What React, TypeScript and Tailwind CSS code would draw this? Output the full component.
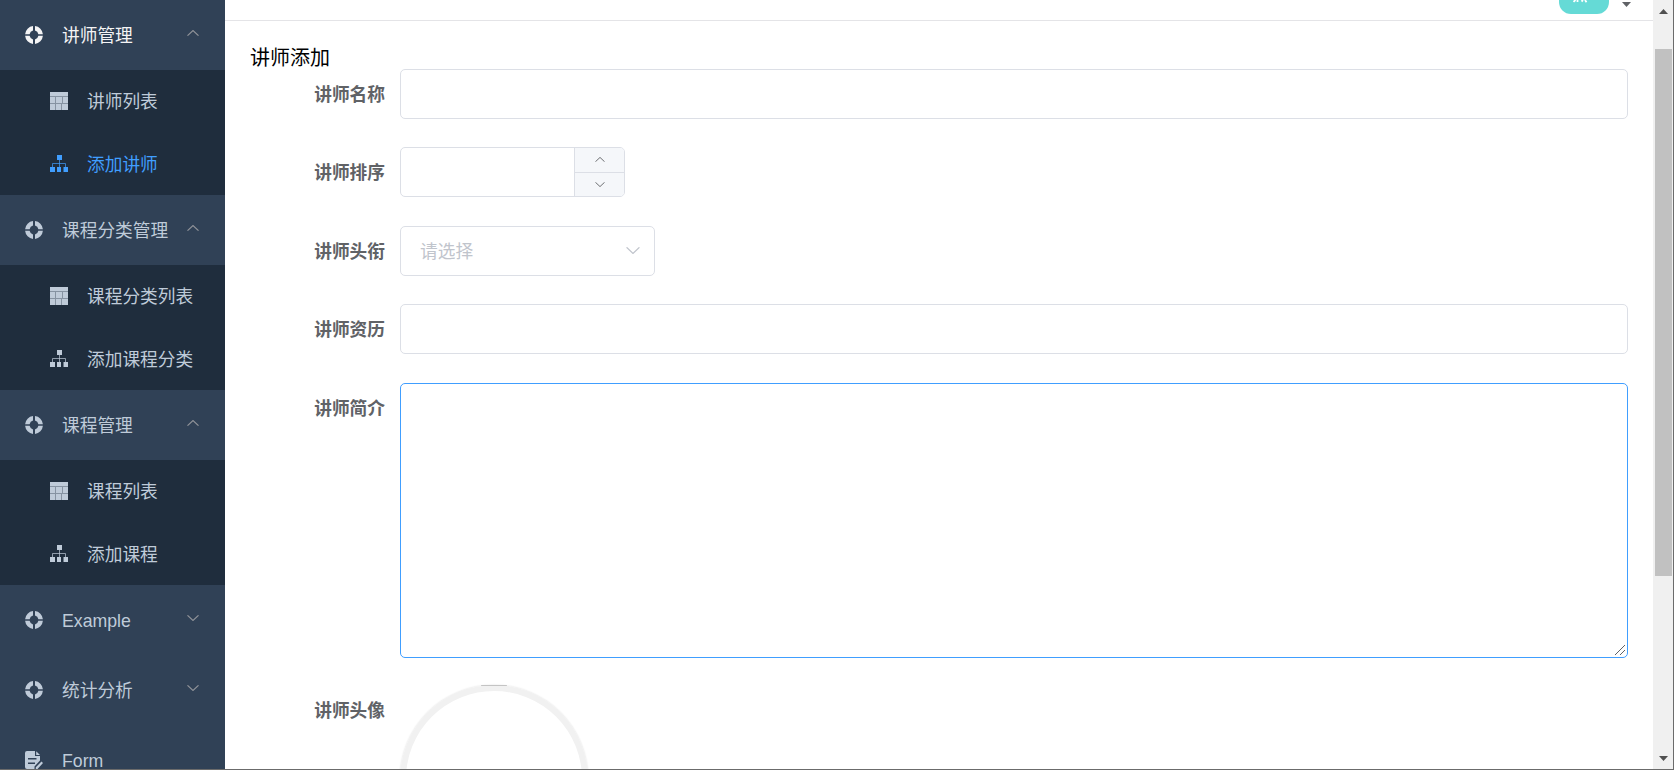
import type { ReactNode } from "react";

const ICON = "h-[18px] w-[18px] shrink-0 fill-current";

function RingIcon() {
  return (
    <svg viewBox="0 0 18 18" className={ICON}>
      <path d="M8 0.1V4.6A4.6 4.6 0 0 0 4.6 8.2H0.1A9 9 0 0 1 8 0.1ZM10 0.1A9 9 0 0 1 17.9 8.2H13.4A4.6 4.6 0 0 0 10 4.6ZM17.9 9.8A9 9 0 0 1 10 17.9V13.4A4.6 4.6 0 0 0 13.4 9.8ZM8 17.9A9 9 0 0 1 0.1 9.8H4.6A4.6 4.6 0 0 0 8 13.4Z" />
    </svg>
  );
}

function TableIcon() {
  return (
    <svg viewBox="0 0 18 18" shapeRendering="crispEdges" className={ICON}>
      <path d="M0 4H18V5H0ZM0 11H18V12H0ZM5 5H6V11H5ZM12 5H13V11H12ZM5 12H6V18H5ZM11 12H12V18H11Z" fillOpacity="0.65" />
      <path d="M0 0H18V4H0ZM0 5H5V11H0ZM6 5H12V11H6ZM13 5H18V11H13ZM0 12H5V18H0ZM6 12H11V18H6ZM12 12H18V18H12Z" />
    </svg>
  );
}

function TreeIcon() {
  return (
    <svg viewBox="0 0 18 18" className={ICON}>
      <path d="M7 0H12V5H7ZM0 12H5V17H0ZM7 12H11V17H7ZM13.5 12H18V17H13.5Z" />
      <path d="M9.5 5V12M2.5 12V8.5H15.5V12" className="fill-none stroke-current" strokeOpacity="0.7" />
    </svg>
  );
}

function FormIcon() {
  return (
    <svg viewBox="0 0 18 18" className={ICON}>
      <path d="M2 0H10V5H15V9.5L9.5 15.5V18H2A2 2 0 0 1 0 16V2A2 2 0 0 1 2 0ZM3 7V8.5H11.5V7ZM3 11.5V13H10V11.5Z" fillRule="evenodd" />
      <path d="M11.2 0.3L15 4H11.2ZM16.5 10.5L18 12L12.5 18H10.8V16.2Z" />
    </svg>
  );
}

function Chevron({ up, className }: { up?: boolean; className: string }) {
  return (
    <svg viewBox="0 0 12 6" className={`fill-none stroke-current ${className}`}>
      <path d={up ? "M0.5 5.7L6 0.5L11.5 5.7" : "M0.5 0.3L6 5.5L11.5 0.3"} strokeWidth="1.1" />
    </svg>
  );
}

const groups = [
  { title: "讲师管理", list: "讲师列表", add: "添加讲师", active: true },
  { title: "课程分类管理", list: "课程分类列表", add: "添加课程分类" },
  { title: "课程管理", list: "课程列表", add: "添加课程" },
];

function MenuTitle({ icon, label, open, active }: { icon: ReactNode; label: string; open?: boolean; active?: boolean }) {
  return (
    <div className={`flex h-[70px] items-center pl-[25px] pr-[26px] ${active ? "text-[#f4f4f5]" : "text-[#bfcbd9]"}`}>
      {icon}
      <span className="ml-[19px] flex-1 pt-[2px]">{label}</span>
      {open !== undefined && <Chevron up={open} className="-mt-1 h-[6px] w-3 text-[#909399]" />}
    </div>
  );
}

function MenuItem({ icon, label, active }: { icon: ReactNode; label: string; active?: boolean }) {
  return (
    <div className={`flex h-[62.5px] items-center pl-[50px] ${active ? "text-[#409eff]" : "text-[#bfcbd9]"}`}>
      {icon}
      <span className="ml-[19px] pt-[3px]">{label}</span>
    </div>
  );
}

function Sidebar() {
  return (
    <aside className="h-full w-[225px] shrink-0 overflow-hidden bg-[#304156]">
      {groups.map((g) => (
        <div key={g.title}>
          <MenuTitle icon={<RingIcon />} label={g.title} open active={g.active} />
          <div className="bg-[#1f2d3d]">
            <MenuItem icon={<TableIcon />} label={g.list} />
            <MenuItem icon={<TreeIcon />} label={g.add} active={g.active} />
          </div>
        </div>
      ))}
      <MenuTitle icon={<RingIcon />} label="Example" open={false} />
      <MenuTitle icon={<RingIcon />} label="统计分析" open={false} />
      <MenuTitle icon={<FormIcon />} label="Form" />
    </aside>
  );
}

function FormItem({ label, children }: { label: string; children: ReactNode }) {
  return (
    <div className="mb-[28.4px] flex last:-mt-[0.5px]">
      <label className="w-[150px] shrink-0 pr-[15px] text-right font-bold leading-[52px] text-[#606266]">{label}</label>
      {children}
    </div>
  );
}

function Scrollbar() {
  return (
    <div className="flex w-5 shrink-0 flex-col items-center bg-[#f0f0f0] text-[#505050]">
      <svg viewBox="0 0 9 5" className="mt-[9px] h-[5px] w-[9px] shrink-0 fill-current">
        <path d="M4.5 0L9 5H0Z" />
      </svg>
      <div className="ml-px mt-[35px] h-[527px] w-[17px] bg-[#c1c1c1]" />
      <svg viewBox="0 0 9 5" className="mb-2 mt-auto h-[5px] w-[9px] shrink-0 fill-current">
        <path d="M0 0H9L4.5 5Z" />
      </svg>
    </div>
  );
}

export default function App() {
  return (
    <div className="flex h-[770px] w-[1674px] overflow-hidden border-b border-r border-[#6b6b6b] bg-white font-['Liberation_Sans','Noto_Sans_CJK_SC',sans-serif] text-[17.7px]">
      <Sidebar />
      <main className="h-full min-w-0 flex-1 overflow-hidden">
        <header className="flex h-[21px] items-start justify-end border-b border-[#e4e4e7] pr-[22px]">
          <div className="flex h-[14px] w-[50px] justify-center overflow-hidden rounded-b-[12px] bg-[#65dad6]">
            <svg viewBox="0 0 16 3" className="-ml-2 h-[3px] w-4 fill-none stroke-white">
              <path d="M3.5 0L1.5 1.8M5.5 0V2M11 0L9.5 1.5M13 0L14.5 2.2" strokeWidth="1.8" />
            </svg>
          </div>
          <svg viewBox="0 0 9 5" className="ml-[13px] mt-[2px] h-[5px] w-[9px] fill-[#606266]">
            <path d="M0 0H9L4.5 5Z" />
          </svg>
        </header>

        <div className="px-[25px] pt-[25px]">
          <div className="h-[23px] text-xl leading-[25px] text-black">讲师添加</div>
          <div className="[&>div]:h-[50px] [&>div:nth-child(5)]:h-[275px]">
            <FormItem label="讲师名称">
              <input className="h-[50px] min-w-0 flex-1 rounded-[5px] border border-[#dcdfe6] outline-none" />
            </FormItem>
            <FormItem label="讲师排序">
              <div className="flex h-[50px] w-[225px] overflow-hidden rounded-[5px] border border-[#dcdfe6]">
                <input className="min-w-0 flex-1 outline-none" />
                <div className="flex w-[50px] flex-col border-l border-[#dcdfe6] bg-[#f5f7fa] text-[#606266]">
                  <button className="flex h-[25px] items-center justify-center border-b border-[#dcdfe6] pb-px">
                    <Chevron up className="h-[5px] w-[10px]" />
                  </button>
                  <button className="flex flex-1 items-center justify-center">
                    <Chevron className="h-[5px] w-[10px]" />
                  </button>
                </div>
              </div>
            </FormItem>
            <FormItem label="讲师头衔">
              <div className="flex h-[50px] w-[255px] items-center justify-between rounded-[5px] border border-[#dcdfe6] pl-[19px] pr-[14px] text-[#c0c4cc]">
                <span className="pt-[3px]">请选择</span>
                <Chevron className="h-[7px] w-[14px]" />
              </div>
            </FormItem>
            <FormItem label="讲师资历">
              <input className="h-[50px] min-w-0 flex-1 rounded-[5px] border border-[#dcdfe6] outline-none" />
            </FormItem>
            <FormItem label="讲师简介">
              <div className="relative flex h-[275px] min-w-0 flex-1">
                <textarea className="h-full w-full resize-none rounded-[5px] border border-[#409eff] outline-none" />
                <svg viewBox="0 0 10 10" className="absolute bottom-[3px] right-[3px] h-[10px] w-[10px] fill-none stroke-[#606266]">
                  <path d="M0 10L10 0M5 10L10 5" />
                </svg>
              </div>
            </FormItem>
            <FormItem label="讲师头像">
              <div className="relative h-[188px] w-[188px] shrink-0 rounded-full border-[6px] border-[#f1f1f1] shadow-[0_0_2px_rgba(0,0,0,0.15)]">
                <div className="absolute -top-[6px] left-[75px] h-px w-[26px] rounded-full bg-[#c4c4c4]" />
              </div>
            </FormItem>
          </div>
        </div>
      </main>
      <Scrollbar />
    </div>
  );
}
